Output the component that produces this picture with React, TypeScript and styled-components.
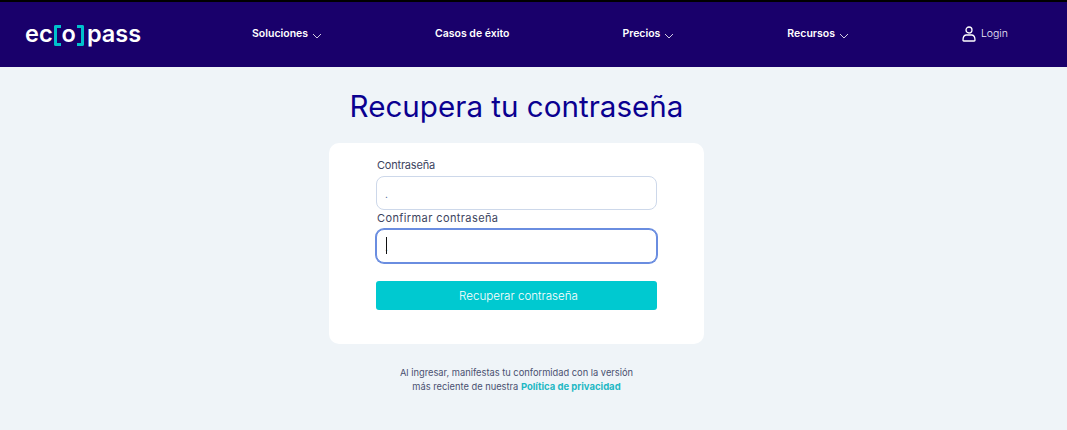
import React from "react";
import styled, { createGlobalStyle } from "styled-components";

const Global = createGlobalStyle`
  html, body { margin: 0; padding: 0; background: #eff4f8; }
  body { font-family: Inter, "Noto Sans", sans-serif; }
`;
const Page = styled.div`
  width: 1067px;
  height: 430px;
  overflow: hidden;
  display: flex;
  flex-direction: column;
`;
const Header = styled.header`
  box-sizing: border-box;
  height: 67px;
  border-top: 2px solid #000;
  background: #19006b;
  display: flex;
  align-items: center;
  padding: 0 59px 2px 25px;
`;
const Logo = styled.div`
  width: 227px;
  display: flex;
  align-items: center;
  font-size: 23.5px;
  line-height: 30px;
  font-weight: 600;
  color: #fff;
  white-space: nowrap;
`;
const Bracket = styled.span<{ $side: "left" | "right" }>`
  box-sizing: border-box;
  width: 7px;
  height: 21px;
  margin: 4px ${(p) => (p.$side === "left" ? "1px" : "3px")} 0 1px;
  border: 3px solid #00c2cc;
  border-${(p) => (p.$side === "left" ? "right" : "left")}: none;
  border-radius: ${(p) => (p.$side === "left" ? "2px 0 0 2px" : "0 2px 2px 0")};
`;
const Nav = styled.nav`
  flex: 1;
  display: flex;
  align-items: center;
  justify-content: space-between;
`;
const NavItem = styled.a`
  display: flex;
  align-items: center;
  gap: 4px;
  font-size: 10.5px;
  font-weight: 600;
  color: #fff;
`;
const LoginLink = styled.a`
  display: flex;
  align-items: center;
  gap: 5px;
  font-size: 10.5px;
  font-weight: 300;
  color: #f0eefa;
`;
const Main = styled.main`
  width: 1033px;
  display: flex;
  flex-direction: column;
  align-items: center;
`;
const Title = styled.h1`
  margin: 20px 0 0;
  font-size: 29.6px;
  line-height: 38px;
  font-weight: 400;
  color: #0a0090;
`;
const Card = styled.form`
  box-sizing: border-box;
  width: 375px;
  height: 201px;
  margin-top: 18px;
  padding: 15px 47px 0;
  background: #fff;
  border-radius: 10px;
  display: flex;
  flex-direction: column;
`;
const Label = styled.label<{ $spacing: number }>`
  font-size: 11px;
  line-height: 14px;
  margin-bottom: 4px;
  color: #3c4460;
  padding-left: 1px;
  letter-spacing: ${(p) => p.$spacing}px;
`;
const Field = styled.div`
  position: relative;
  height: 34px;
  margin-bottom: 1px;
`;
const Input = styled.input<{ $focused?: boolean }>`
  box-sizing: border-box;
  width: 100%;
  height: 100%;
  padding: 2px 8px 0;
  font-family: inherit;
  font-size: 10px;
  color: #3c5a90;
  background: #fff;
  outline: none;
  border-radius: 8px;
  border: 1px solid ${(p) => (p.$focused ? "#6a8de0" : "#cdd8ea")};
  box-shadow: ${(p) => (p.$focused ? "0 0 0 1px #6a8de0" : "none")};
`;
const Caret = styled.span`
  position: absolute;
  left: 10px;
  top: 8px;
  width: 1px;
  height: 17px;
  background: #111;
`;
const Submit = styled.button`
  height: 29px;
  margin-top: 17px;
  padding: 0 0 0 4px;
  border: none;
  border-radius: 3px;
  background: #00c9d0;
  color: #fff;
  font-family: inherit;
  font-size: 11.6px;
  font-weight: 300;
`;
const Note = styled.p`
  margin: 22px 0 0;
  font-size: 9.3px;
  line-height: 14px;
  font-weight: 400;
  text-align: center;
  color: #4a5170;
`;
const Policy = styled.a`
  font-size: 9.5px;
  font-weight: 700;
  color: #1fb8c4;
`;

const Chevron = () => (
  <svg width="10" height="6" viewBox="0 0 10 6" fill="none" stroke="#fff" strokeWidth="0.8" style={{ marginTop: 4 }}>
    <path d="M1 1l4 4 4-4" />
  </svg>
);
const User = () => (
  <svg width="14" height="16" viewBox="0 0 14 16" fill="none" stroke="#fff" strokeWidth="1.3">
    <circle cx="7" cy="4" r="3" />
    <path d="M1 14.200c0-3 1.500-5 3-5.200h6c1.500.2 3 2.200 3 5.200 0 .5-.3.8-.8.8H1.800c-.5 0-.8-.3-.8-.8z" />
  </svg>
);

export default function App() {
  return (
    <Page>
      <Global />
      <Header>
        <Logo>
          ec<Bracket $side="left" />o<Bracket $side="right" />pass
        </Logo>
        <Nav>
          <NavItem>Soluciones <Chevron /></NavItem>
          <NavItem>Casos de éxito</NavItem>
          <NavItem>Precios <Chevron /></NavItem>
          <NavItem>Recursos <Chevron /></NavItem>
          <LoginLink><User /> Login</LoginLink>
        </Nav>
      </Header>
      <Main>
        <Title>Recupera tu contraseña</Title>
        <Card>
          <Label $spacing={-0.2}>Contraseña</Label>
          <Field><Input readOnly value="." /></Field>
          <Label $spacing={0.4}>Confirmar contraseña</Label>
          <Field>
            <Input $focused readOnly value="." />
            <Caret />
          </Field>
          <Submit type="button">Recuperar contraseña</Submit>
        </Card>
        <Note>
          Al ingresar, manifestas tu conformidad con la versión<br />
          más reciente de nuestra <Policy>Política de privacidad</Policy>
        </Note>
      </Main>
    </Page>
  );
}
